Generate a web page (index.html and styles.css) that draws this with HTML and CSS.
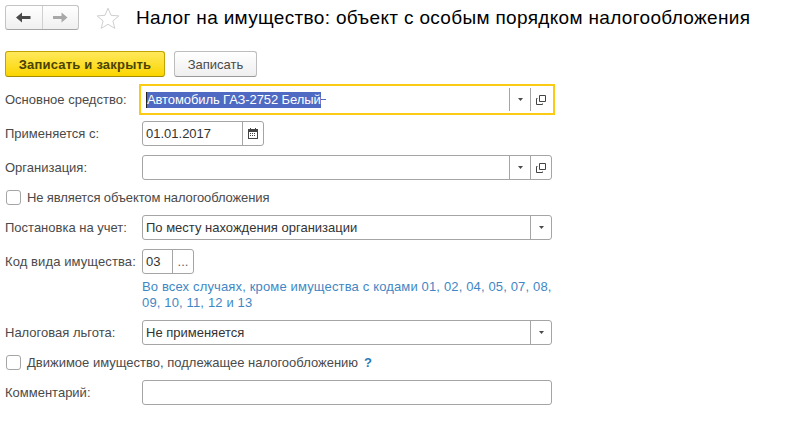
FILE: index.html
```html
<!DOCTYPE html>
<html lang="ru">
<head>
<meta charset="utf-8">
<title>Налог на имущество</title>
<link rel="stylesheet" href="styles.css">
</head>
<body>
<header class="head">
  <div class="nav">
    <button class="nav-btn" type="button"><svg width="15" height="11" viewBox="0 0 15 11"><path d="M0 5.500 6 .5v3.500h8.500v3H6v3.500z" fill="#4a4a4a"/></svg></button>
    <button class="nav-btn nav-btn-last" type="button"><svg width="15" height="11" viewBox="0 0 15 11"><path d="M14.500 5.500 8.500.5v3.500H0v3h8.500v3.500z" fill="#a8a8a8"/></svg></button>
  </div>
  <svg class="star" width="24" height="22" viewBox="0 0 24 22"><path d="M12 1.200l3 7.100 7.900.6-6 5 1.900 7.500L12 17.300l-6.800 4.100 1.900-7.500-6-5 7.900-.6z" fill="#fff" stroke="#cfcfcf"/></svg>
  <h1 class="title">Налог на имущество: объект с особым порядком налогообложения</h1>
</header>
<div class="actions">
  <button class="btn btn-primary" type="button">Записать и закрыть</button>
  <button class="btn" type="button">Записать</button>
</div>
<form class="form">
  <div class="row">
    <label class="label">Основное средство:</label>
    <div class="field field-focus wide">
      <div class="value value-sel"><span class="caret"></span><span class="sel">Автомобиль ГАЗ-2752 Белый</span><span class="dash"></span></div>
      <span class="cell"><svg width="5" height="3" viewBox="0 0 5 3"><path d="M0 0h5L2.500 3z" fill="#4a4a4a"/></svg></span>
      <span class="cell"><svg width="10" height="10" viewBox="0 0 10 10"><path d="M3.500.5h6v6h-6zM1.500 3.500h-1v6h6v-1" fill="none" stroke="#444"/></svg></span>
    </div>
  </div>
  <div class="row gap-1">
    <label class="label">Применяется с:</label>
    <div class="field date">
      <div class="value">01.01.2017</div>
      <span class="cell"><svg width="10" height="11" viewBox="0 0 10 11"><path d="M0 1h10v10H0z" fill="#444"/><path d="M1 4h8v6H1z" fill="#fff"/><path d="M2 0h1v2H2zM7 0h1v2H7z" fill="#444"/><path d="M2 5h1v1H2zM4 5h1v1H4zM6 5h1v1H6zM2 7h1v1H2zM4 7h1v1H4zM6 7h1v1H6z" fill="#444"/></svg></span>
    </div>
  </div>
  <div class="row gap-2">
    <label class="label">Организация:</label>
    <div class="field wide">
      <div class="value"></div>
      <span class="cell"><svg width="5" height="3" viewBox="0 0 5 3"><path d="M0 0h5L2.500 3z" fill="#4a4a4a"/></svg></span>
      <span class="cell"><svg width="10" height="10" viewBox="0 0 10 10"><path d="M3.500.5h6v6h-6zM1.500 3.500h-1v6h6v-1" fill="none" stroke="#444"/></svg></span>
    </div>
  </div>
  <div class="check gap-3"><span class="box"></span><span class="check-tight">Не является объектом налогообложения</span></div>
  <div class="row gap-3">
    <label class="label">Постановка на учет:</label>
    <div class="field wide">
      <div class="value">По месту нахождения организации</div>
      <span class="cell"><svg width="5" height="3" viewBox="0 0 5 3"><path d="M0 0h5L2.500 3z" fill="#4a4a4a"/></svg></span>
    </div>
  </div>
  <div class="row gap-2">
    <label class="label label-code">Код вида имущества:</label>
    <div class="field code">
      <div class="value">03</div>
      <span class="cell cell-dots">...</span>
    </div>
  </div>
  <p class="hint">Во всех случаях, кроме имущества с кодами 01, 02, 04, 05, 07, 08, 09, 10, 11, 12 и 13</p>
  <div class="row gap-hint">
    <label class="label">Налоговая льгота:</label>
    <div class="field wide">
      <div class="value">Не применяется</div>
      <span class="cell"><svg width="5" height="3" viewBox="0 0 5 3"><path d="M0 0h5L2.500 3z" fill="#4a4a4a"/></svg></span>
    </div>
  </div>
  <div class="check gap-3"><span class="box"></span><span>Движимое имущество, подлежащее налогообложению</span><span class="help">?</span></div>
  <div class="row gap-3">
    <label class="label">Комментарий:</label>
    <div class="field wide"><div class="value"></div></div>
  </div>
</form>
</body>
</html>
```
FILE: styles.css
```css
* { box-sizing: border-box; }
html, body { margin: 0; height: 100%; }
body {
  background: #fff;
  font-family: "Liberation Sans", Arial, sans-serif;
  font-size: 13px;
  color: #4a4a4a;
  padding: 5px 0 0 5px;
  overflow: hidden;
}
.head { display: flex; align-items: center; height: 25px; }
.nav {
  display: flex;
  width: 74px;
  height: 25px;
  border: 1px solid #c4c4c4;
  border-bottom-color: #a5a5a5;
  border-radius: 3px;
  background: linear-gradient(#fff, #f0f0f0);
}
.nav-btn {
  flex: 1;
  display: flex;
  align-items: center;
  justify-content: center;
  padding: 0;
  border: 0;
  background: none;
}
.nav-btn-last { border-left: 1px solid #d0d0d0; }
.star { margin: 1px 0 0 17px; }
.title {
  margin: 0 0 0 16px;
  font-size: 19px;
  font-weight: 400;
  letter-spacing: .33px;
  color: #000;
  white-space: nowrap;
}
.actions { display: flex; gap: 9px; margin-top: 21px; }
.btn {
  height: 26px;
  width: 83px;
  padding: 0;
  border: 1px solid #bdbdbd;
  border-bottom-color: #999;
  border-radius: 3px;
  background: linear-gradient(#fff, #efefef);
  font: inherit;
  color: #4a4a4a;
}
.btn-primary {
  width: 160px;
  border-color: #c2a400;
  border-bottom-color: #a48b00;
  background: linear-gradient(#ffe95c, #fbd500);
  font-weight: 700;
  letter-spacing: .2px;
  color: #4a4300;
}
.form { display: flex; flex-direction: column; margin-top: 10px; }
.row { display: flex; align-items: center; height: 25px; }
.label { width: 137px; flex: none; white-space: nowrap; }
.label-code { letter-spacing: .1px; }
.field {
  display: flex;
  height: 25px;
  border: 1px solid #a5a5a5;
  border-radius: 3px;
  background: #fff;
  color: #333;
}
.field-focus {
  border-color: transparent;
  border-radius: 0;
  outline: 2px solid #fbcb14;
  outline-offset: 1px;
}
.wide { width: 410px; }
.date { width: 122px; }
.code { width: 52px; }
.value { flex: 1; min-width: 0; display: flex; align-items: center; padding-left: 3px; white-space: nowrap; }
.value-sel { letter-spacing: -.1px; }
.cell {
  flex: none;
  width: 21px;
  display: flex;
  align-items: center;
  justify-content: center;
  border-left: 1px solid #a5a5a5;
}
.cell-dots { color: #666; }
.caret { width: 1px; height: 16px; background: #222; }
.sel { background: #4f6ac2; color: #fff; height: 16px; line-height: 16px; }
.dash { width: 5px; height: 1px; background: #4f6ac2; }
.check { display: flex; align-items: center; height: 15px; }
.check-tight { letter-spacing: -.12px; }
.box {
  width: 15px;
  height: 15px;
  margin: 0 6px 0 1px;
  border: 1px solid #a5a5a5;
  border-radius: 3px;
  background: #fff;
}
.help { margin-left: 6px; font-weight: 700; color: #2a7ab8; }
.gap-1 { margin-top: 9px; }
.gap-2 { margin-top: 9px; }
.gap-3 { margin-top: 10px; }
.gap-hint { margin-top: 9px; }
.hint {
  width: 415px;
  margin: 5px 0 0 137px;
  line-height: 16px;
  letter-spacing: .15px;
  color: #3f87c4;
}
```
